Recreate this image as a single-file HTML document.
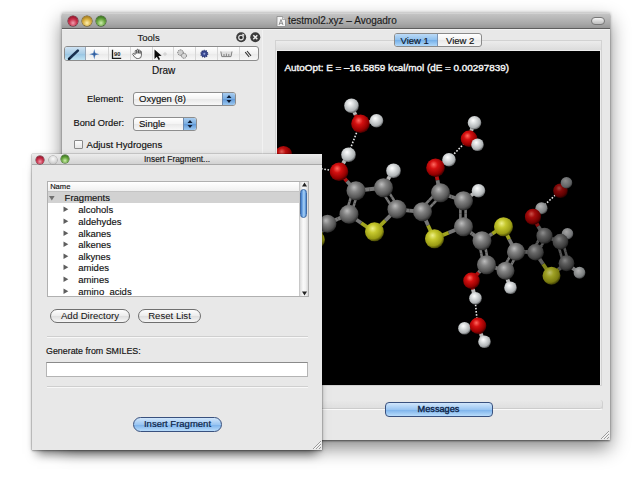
<!DOCTYPE html>
<html><head><meta charset="utf-8">
<style>
*{box-sizing:border-box;margin:0;padding:0}
html,body{width:638px;height:480px;overflow:hidden;background:#fff;font-family:"Liberation Sans",sans-serif;color:#111}
.abs{position:absolute}
.win{position:absolute;background:#e8e8e8}
#main{left:62px;top:13px;width:548px;height:427px;box-shadow:0 0 3px rgba(0,0,0,.3),0 1.5px 1.5px rgba(0,0,0,.3),0 8px 18px rgba(0,0,0,.48)}
#mtitle{left:0;top:0;width:548px;height:16px;background:linear-gradient(#dcdcdc 0,#c3c3c3 8%,#a9a9a9 70%,#979797 100%);border-bottom:1px solid #5e5e5e;box-shadow:0 1px 0 #f2f2f2}
.tl{position:absolute;width:10px;height:10px;border-radius:50%}
.red{background:radial-gradient(circle at 50% 70%,#f0a0b0 0,#c8304a 45%,#8a1026 85%,#5a0818 100%);box-shadow:0 0 0 .5px #5a1a28}
.yel{background:radial-gradient(circle at 50% 70%,#fff0b0 0,#d8b040 45%,#9a7018 85%,#6a4a08 100%);box-shadow:0 0 0 .5px #6a5010}
.grn{background:radial-gradient(circle at 50% 70%,#d0f0b0 0,#6aa840 45%,#306818 85%,#204a10 100%);box-shadow:0 0 0 .5px #2a5018}
.gry{background:radial-gradient(circle at 50% 35%,#fafafa 0,#dcdcdc 50%,#b5b5b5 100%);box-shadow:0 0 0 .6px #9a9a9a}
.t{position:absolute;white-space:nowrap;line-height:1;-webkit-text-stroke:.15px #111}
#ifrag{left:32px;top:154px;width:290px;height:296px;box-shadow:0 0 1px rgba(0,0,0,.6),0 1px 2px rgba(0,0,0,.25),0 9px 10px -5px rgba(0,0,0,.55),0 0 5px rgba(0,0,0,.1)}
#ititle{left:0;top:0;width:290px;height:11px;background:linear-gradient(#ececec,#d2d2d2);border-bottom:1px solid #a9a9a9}
.btn{position:absolute;border:1px solid #6f6f6f;border-radius:8px;background:linear-gradient(#fdfdfd 0,#ececec 50%,#dedede 51%,#f6f6f6 100%);font-size:9.6px;text-align:center;line-height:13px}
.bbtn{position:absolute;border:1px solid #39517e;border-radius:8px;background:linear-gradient(#d1e6fb 0,#9bc6f2 50%,#79b0ea 51%,#b9dcfb 100%);font-size:9.5px;text-align:center;line-height:13px;color:#0c1f46;-webkit-text-stroke:.2px #0c1f46}
</style></head><body>

<!-- MAIN WINDOW -->
<div id="main" class="win">
  <div id="mtitle" class="abs">
    <div class="tl red" style="left:6px;top:3px"></div>
    <div class="tl yel" style="left:20px;top:3px"></div>
    <div class="tl grn" style="left:34px;top:3px"></div>
    <svg class="abs" style="left:213.5px;top:2.5px" width="10" height="11"><path d="M1 .5 H6.5 L9.5 3.5 V10.5 H1 Z" fill="#f6f6f6" stroke="#8a8a8a" stroke-width=".8"/><path d="M6.5 .5 V3.5 H9.5" fill="#ddd" stroke="#8a8a8a" stroke-width=".6"/><path d="M3 9 L5 3.5 L7 9 M3.7 7.3 H6.3" stroke="#777" stroke-width=".8" fill="none"/></svg>
    <div class="t" style="left:226px;top:3px;font-size:10px;color:#222">testmol2.xyz – Avogadro</div>
    <div class="abs" style="left:529px;top:4px;width:14px;height:8px;border-radius:4px;border:1px solid #777;background:linear-gradient(#f4f4f4,#bdbdbd)"></div>
  </div>

  <!-- tools dock -->
  <div class="abs" style="left:199.5px;top:16px;width:1px;height:411px;background:#d6d6d6"></div>
  <div class="abs" style="left:200px;top:16px;width:1px;height:411px;background:#f2f2f2"></div>
  <div class="t" style="left:75.5px;top:20px;font-size:9.5px;color:#222">Tools</div>
  <svg class="abs" style="left:173.5px;top:19px" width="11" height="11"><circle cx="5.2" cy="5.2" r="5" fill="#3c3c3c"/><circle cx="5" cy="5.6" r="2.3" fill="none" stroke="#e6e6e6" stroke-width="1.1"/><circle cx="5" cy="5.6" r=".8" fill="#222"/><path d="M6 2.2 L8 2.6 L7.4 4.4" stroke="#e6e6e6" stroke-width=".9" fill="none"/></svg>
  
  <svg class="abs" style="left:187.5px;top:19px" width="11" height="11"><circle cx="5.3" cy="5.2" r="5" fill="#3c3c3c"/><path d="M3.3 3.2 L7.3 7.2 M7.3 3.2 L3.3 7.2" stroke="#f0f0f0" stroke-width="1.5"/></svg>
  
  <!-- segmented toolbar -->
  <div class="abs" style="left:2px;top:33px;width:195px;height:15px;border:1px solid #8c8c8c;border-radius:3px;background:linear-gradient(#ffffff,#f1f1f1 50%,#e9e9e9 51%,#f7f7f7);overflow:hidden">
    <div class="abs" style="left:0;top:0;width:20px;height:13px;background:linear-gradient(#cfe3f3,#a9cde6 50%,#96c3e2 51%,#bfe3f2)"></div>
    <div class="abs" style="left:20px;top:0;width:1px;height:13px;background:#9aa8b8"></div>
    <div class="abs" style="left:43px;top:0;width:1px;height:13px;background:#d6d6d6"></div>
    <div class="abs" style="left:65px;top:0;width:1px;height:13px;background:#d6d6d6"></div>
    <div class="abs" style="left:87px;top:0;width:1px;height:13px;background:#d6d6d6"></div>
    <div class="abs" style="left:108px;top:0;width:1px;height:13px;background:#d6d6d6"></div>
    <div class="abs" style="left:130px;top:0;width:1px;height:13px;background:#d6d6d6"></div>
    <div class="abs" style="left:152px;top:0;width:1px;height:13px;background:#d6d6d6"></div>
    <div class="abs" style="left:174px;top:0;width:1px;height:13px;background:#d6d6d6"></div>
    <svg class="abs" style="left:0;top:0.5px" width="195" height="12" viewBox="0 0 195 12">
      <path d="M4.2 10.8 L12.8 2.6" stroke="#1a3150" stroke-width="2.6" stroke-linecap="round"/>
      <path d="M3.2 11.6 L5 9.8" stroke="#0a1628" stroke-width="1.4"/>
      <path d="M29.3 1 L30.4 5.1 L34.4 6.2 L30.4 7.3 L29.3 11.4 L28.2 7.3 L24.2 6.2 L28.2 5.1 Z" fill="#5a86c0"/>
      <path d="M29.3 3.5 L29.9 5.6 L32 6.2 L29.9 6.8 L29.3 8.9 L28.7 6.8 L26.6 6.2 L28.7 5.6 Z" fill="#2f5a98"/>
      <path d="M47.5 1.8 V10.4 H56.2" stroke="#1a1a1a" stroke-width="1.3" fill="none"/>
      <text x="49" y="8.4" font-size="5.8" font-family="Liberation Sans" fill="#222" font-weight="700">90</text>
      <path d="M70.2 6.5 V3.2 q0 -.9 .8 -.9 q.8 0 .8 .9 V5.5 V2.2 q0 -.9 .8 -.9 q.8 0 .8 .9 V5.3 V2.8 q0 -.8 .8 -.8 q.8 0 .8 .8 V5.6 V3.8 q0 -.7 .7 -.7 q.7 0 .7 .7 V7.5 q0 3 -3 3 h-1 q-1.8 0 -2.8 -1.6 L67.8 6.6 q-.4 -.8 .3 -1.1 q.7 -.3 1.2 .4 Z" stroke="#404040" stroke-width=".8" fill="#fbfbfb"/>
      <path d="M89.5 1.5 L89.5 11 L91.8 8.7 L93.6 12 L95.1 11.2 L93.4 8 L96.6 7.8 Z" fill="#0a0a0a"/>
      <path d="M98 6 H102 M100 4 V8" stroke="#c8c8c8" stroke-width=".8"/>
      <circle cx="115.5" cy="4.6" r="2.8" fill="#cfcfcf" stroke="#707070" stroke-width="1" stroke-dasharray="1.2 .8"/>
      <circle cx="119" cy="7.8" r="2.5" fill="#d8d8d8" stroke="#707070" stroke-width="1" stroke-dasharray="1.2 .8"/>
      <circle cx="139.3" cy="5.8" r="3.2" fill="#3a4a94" stroke="#2a3670" stroke-width="1.6" stroke-dasharray="1.1 .9"/>
      <circle cx="139.3" cy="5.8" r="1" fill="#9aa8d8"/>
      <path d="M155.8 3.5 L156.8 8.6 H166 L167 3.5 M159 6 V8.4 M161.4 5.6 V8.4 M163.8 6 V8.4" stroke="#808080" stroke-width="1" fill="#dedede"/>
      <path d="M180.2 4.2 L184.2 9 M182 3 L186 7.8" stroke="#333" stroke-width="1.1"/>
    </svg>
  </div>
  <div class="t" style="left:90px;top:53px;font-size:10px;color:#111">Draw</div>
  <div class="t" style="left:25px;top:82px;font-size:9.3px;color:#111">Element:</div>
  <div class="abs" style="left:71px;top:79px;width:103px;height:14px;border:1px solid #8d8d8d;border-radius:3px;background:linear-gradient(#ffffff,#f3f3f3 50%,#e8e8e8 51%,#f8f8f8);overflow:hidden">
    <div class="abs" style="left:88px;top:0;width:14px;height:12px;background:linear-gradient(#a9cdf0,#78ace0 50%,#5f98d8 51%,#9cc8f0);border-left:1px solid #6d89ad"></div>
    <svg class="abs" style="left:91px;top:1px" width="8" height="10"><path d="M4 1 L6.5 4 H1.5Z M4 9 L6.5 6 H1.5Z" fill="#0e1d35"/></svg>
  </div>
  <div class="t" style="left:77px;top:81.2px;font-size:9.5px;color:#111">Oxygen (8)</div>
  <div class="t" style="left:11.5px;top:105.5px;font-size:9.3px;color:#111">Bond Order:</div>
  <div class="abs" style="left:71px;top:104px;width:64px;height:14px;border:1px solid #8d8d8d;border-radius:3px;background:linear-gradient(#ffffff,#f3f3f3 50%,#e8e8e8 51%,#f8f8f8);overflow:hidden">
    <div class="abs" style="left:49px;top:0;width:14px;height:12px;background:linear-gradient(#a9cdf0,#78ace0 50%,#5f98d8 51%,#9cc8f0);border-left:1px solid #6d89ad"></div>
    <svg class="abs" style="left:52px;top:1px" width="8" height="10"><path d="M4 1 L6.5 4 H1.5Z M4 9 L6.5 6 H1.5Z" fill="#0e1d35"/></svg>
  </div>
  <div class="t" style="left:77px;top:105.6px;font-size:9.5px;color:#111">Single</div>
  <div class="abs" style="left:11.5px;top:127px;width:9px;height:9px;border:1px solid #8a8a8a;border-radius:1px;background:linear-gradient(#fdfdfd,#e6e6e6)"></div>
  <div class="t" style="left:24.5px;top:126.5px;font-size:9.6px;color:#111">Adjust Hydrogens</div>

  <!-- tab widget -->
  <div class="abs" style="left:213px;top:27px;width:327px;height:346px;border:1px solid #d2d2d2;background:#ededed"></div>
  <div class="abs" style="left:214px;top:28px;width:325px;height:9px;background:linear-gradient(#ececec,#dcdcdc)"></div>
  <div class="abs" style="left:332px;top:20px;width:88px;height:14px;border:1px solid #8a8a8a;border-radius:3px;background:linear-gradient(#ffffff,#f2f2f2 50%,#e9e9e9 51%,#f6f6f6);overflow:hidden">
    <div class="abs" style="left:0;top:0;width:43px;height:12px;background:linear-gradient(#bcdaf6,#8ec0ee 50%,#74afe8 51%,#b0d8fa);border-right:1px solid #7a95b8"></div>
  </div>
  <div class="t" style="left:338.5px;top:22.5px;font-size:9.5px;color:#0c1a33">View 1</div>
  <div class="t" style="left:384px;top:22.5px;font-size:9.5px;color:#111">View 2</div>
  <div id="gl" class="abs" style="left:215px;top:37.5px;width:323px;height:334.5px;background:#000;overflow:hidden">
<svg class="abs" style="left:0;top:0" width="323" height="335" viewBox="277 50.5 323 334.5">
<defs>
<radialGradient id="gC" cx="0.42" cy="0.38" r="0.62" fx="0.4" fy="0.32"><stop offset="0" stop-color="#bdbdbd"/><stop offset="0.35" stop-color="#858585"/><stop offset="0.8" stop-color="#555555"/><stop offset="1" stop-color="#2a2a2a"/></radialGradient>
<radialGradient id="gO" cx="0.42" cy="0.38" r="0.62" fx="0.4" fy="0.32"><stop offset="0" stop-color="#ff6a60"/><stop offset="0.35" stop-color="#d41010"/><stop offset="0.8" stop-color="#940000"/><stop offset="1" stop-color="#420000"/></radialGradient>
<radialGradient id="gH" cx="0.42" cy="0.38" r="0.62" fx="0.4" fy="0.32"><stop offset="0" stop-color="#ffffff"/><stop offset="0.35" stop-color="#dcdfe0"/><stop offset="0.8" stop-color="#aeb2b4"/><stop offset="1" stop-color="#5a5c5e"/></radialGradient>
<radialGradient id="gS" cx="0.42" cy="0.38" r="0.62" fx="0.4" fy="0.32"><stop offset="0" stop-color="#eef08a"/><stop offset="0.35" stop-color="#c6c82e"/><stop offset="0.8" stop-color="#9a9c14"/><stop offset="1" stop-color="#4a4a06"/></radialGradient>
<radialGradient id="fO6" cx="0.42" cy="0.38" r="0.62" fx="0.4" fy="0.32"><stop offset="0" stop-color="#9e413b"/><stop offset="0.35" stop-color="#830909"/><stop offset="0.8" stop-color="#5b0000"/><stop offset="1" stop-color="#280000"/></radialGradient>
<radialGradient id="fH11" cx="0.42" cy="0.38" r="0.62" fx="0.4" fy="0.32"><stop offset="0" stop-color="#8c8c8c"/><stop offset="0.35" stop-color="#797a7b"/><stop offset="0.8" stop-color="#5f6163"/><stop offset="1" stop-color="#313233"/></radialGradient>
<radialGradient id="fH12" cx="0.42" cy="0.38" r="0.62" fx="0.4" fy="0.32"><stop offset="0" stop-color="#b7b7b7"/><stop offset="0.35" stop-color="#9ea0a1"/><stop offset="0.8" stop-color="#7d8081"/><stop offset="1" stop-color="#404243"/></radialGradient>
<radialGradient id="fO7" cx="0.42" cy="0.38" r="0.62" fx="0.4" fy="0.32"><stop offset="0" stop-color="#c6524a"/><stop offset="0.35" stop-color="#a50c0c"/><stop offset="0.8" stop-color="#730000"/><stop offset="1" stop-color="#330000"/></radialGradient>
<radialGradient id="fC14" cx="0.42" cy="0.38" r="0.62" fx="0.4" fy="0.32"><stop offset="0" stop-color="#8d8d8d"/><stop offset="0.35" stop-color="#636363"/><stop offset="0.8" stop-color="#3f3f3f"/><stop offset="1" stop-color="#1f1f1f"/></radialGradient>
<radialGradient id="fC16" cx="0.42" cy="0.38" r="0.62" fx="0.4" fy="0.32"><stop offset="0" stop-color="#848484"/><stop offset="0.35" stop-color="#5d5d5d"/><stop offset="0.8" stop-color="#3b3b3b"/><stop offset="1" stop-color="#1d1d1d"/></radialGradient>
<radialGradient id="fH13" cx="0.42" cy="0.38" r="0.62" fx="0.4" fy="0.32"><stop offset="0" stop-color="#a5a5a5"/><stop offset="0.35" stop-color="#8f9091"/><stop offset="0.8" stop-color="#717375"/><stop offset="1" stop-color="#3a3b3d"/></radialGradient>
<radialGradient id="fC15" cx="0.42" cy="0.38" r="0.62" fx="0.4" fy="0.32"><stop offset="0" stop-color="#939393"/><stop offset="0.35" stop-color="#676767"/><stop offset="0.8" stop-color="#424242"/><stop offset="1" stop-color="#202020"/></radialGradient>
<radialGradient id="fC17" cx="0.42" cy="0.38" r="0.62" fx="0.4" fy="0.32"><stop offset="0" stop-color="#848484"/><stop offset="0.35" stop-color="#5d5d5d"/><stop offset="0.8" stop-color="#3b3b3b"/><stop offset="1" stop-color="#1d1d1d"/></radialGradient>
<radialGradient id="fS4" cx="0.42" cy="0.38" r="0.62" fx="0.4" fy="0.32"><stop offset="0" stop-color="#bec06e"/><stop offset="0.35" stop-color="#9ea024"/><stop offset="0.8" stop-color="#7b7c10"/><stop offset="1" stop-color="#3b3b04"/></radialGradient>
<radialGradient id="fH14" cx="0.42" cy="0.38" r="0.62" fx="0.4" fy="0.32"><stop offset="0" stop-color="#b2b2b2"/><stop offset="0.35" stop-color="#9a9c9c"/><stop offset="0.8" stop-color="#797c7d"/><stop offset="1" stop-color="#3e4041"/></radialGradient>
<radialGradient id="fRP" cx="0.42" cy="0.38" r="0.62" fx="0.4" fy="0.32"><stop offset="0" stop-color="#e55f56"/><stop offset="0.35" stop-color="#be0e0e"/><stop offset="0.8" stop-color="#850000"/><stop offset="1" stop-color="#3b0000"/></radialGradient>
</defs>
<line x1="360.0" y1="123.0" x2="355.5" y2="114.0" stroke="#b01010" stroke-width="3.8"/>
<line x1="355.5" y1="114.0" x2="351.0" y2="105.0" stroke="#b8b8b8" stroke-width="3.8"/>
<line x1="360.0" y1="123.0" x2="368.0" y2="121.5" stroke="#b01010" stroke-width="3.8"/>
<line x1="368.0" y1="121.5" x2="376.0" y2="120.0" stroke="#b8b8b8" stroke-width="3.8"/>
<line x1="338.5" y1="171.0" x2="343.2" y2="162.5" stroke="#b01010" stroke-width="3.8"/>
<line x1="343.2" y1="162.5" x2="348.0" y2="154.0" stroke="#b8b8b8" stroke-width="3.8"/>
<line x1="338.5" y1="171.0" x2="347.0" y2="180.5" stroke="#b01010" stroke-width="3.8"/>
<line x1="347.0" y1="180.5" x2="355.5" y2="190.0" stroke="#767676" stroke-width="3.8"/>
<line x1="358.0" y1="190.7" x2="354.5" y2="202.5" stroke="#767676" stroke-width="2.6"/>
<line x1="354.5" y1="202.5" x2="351.0" y2="214.2" stroke="#767676" stroke-width="2.6"/>
<line x1="353.0" y1="189.3" x2="349.5" y2="201.0" stroke="#767676" stroke-width="2.6"/>
<line x1="349.5" y1="201.0" x2="346.0" y2="212.8" stroke="#767676" stroke-width="2.6"/>
<line x1="355.5" y1="190.0" x2="369.2" y2="188.5" stroke="#767676" stroke-width="3.8"/>
<line x1="369.2" y1="188.5" x2="383.0" y2="187.0" stroke="#767676" stroke-width="3.8"/>
<line x1="383.0" y1="187.0" x2="388.0" y2="178.5" stroke="#767676" stroke-width="3.8"/>
<line x1="388.0" y1="178.5" x2="393.0" y2="170.0" stroke="#b8b8b8" stroke-width="3.8"/>
<line x1="385.2" y1="185.6" x2="392.0" y2="196.4" stroke="#767676" stroke-width="2.6"/>
<line x1="392.0" y1="196.4" x2="398.7" y2="207.1" stroke="#767676" stroke-width="2.6"/>
<line x1="380.8" y1="188.4" x2="387.5" y2="199.1" stroke="#767676" stroke-width="2.6"/>
<line x1="387.5" y1="199.1" x2="394.3" y2="209.9" stroke="#767676" stroke-width="2.6"/>
<line x1="396.5" y1="208.5" x2="385.2" y2="219.8" stroke="#767676" stroke-width="3.8"/>
<line x1="385.2" y1="219.8" x2="374.0" y2="231.0" stroke="#a0a420" stroke-width="3.8"/>
<line x1="374.0" y1="231.0" x2="361.2" y2="222.2" stroke="#a0a420" stroke-width="3.8"/>
<line x1="361.2" y1="222.2" x2="348.5" y2="213.5" stroke="#767676" stroke-width="3.8"/>
<line x1="348.5" y1="213.5" x2="337.8" y2="218.2" stroke="#767676" stroke-width="3.8"/>
<line x1="337.8" y1="218.2" x2="327.0" y2="223.0" stroke="#767676" stroke-width="3.8"/>
<line x1="327.0" y1="223.0" x2="321.5" y2="231.0" stroke="#767676" stroke-width="3.8"/>
<line x1="321.5" y1="231.0" x2="316.0" y2="239.0" stroke="#a0a420" stroke-width="3.8"/>
<line x1="396.5" y1="208.5" x2="409.2" y2="209.8" stroke="#767676" stroke-width="3.8"/>
<line x1="409.2" y1="209.8" x2="422.0" y2="211.0" stroke="#767676" stroke-width="3.8"/>
<line x1="435.0" y1="167.0" x2="441.8" y2="163.0" stroke="#b01010" stroke-width="3.8"/>
<line x1="441.8" y1="163.0" x2="448.5" y2="159.0" stroke="#b8b8b8" stroke-width="3.8"/>
<line x1="435.0" y1="167.0" x2="437.5" y2="179.5" stroke="#b01010" stroke-width="3.8"/>
<line x1="437.5" y1="179.5" x2="440.0" y2="192.0" stroke="#767676" stroke-width="3.8"/>
<line x1="468.6" y1="138.0" x2="471.3" y2="130.0" stroke="#b01010" stroke-width="3.8"/>
<line x1="471.3" y1="130.0" x2="474.0" y2="122.0" stroke="#b8b8b8" stroke-width="3.8"/>
<line x1="468.6" y1="138.0" x2="472.8" y2="141.0" stroke="#b01010" stroke-width="3.8"/>
<line x1="472.8" y1="141.0" x2="477.0" y2="144.0" stroke="#b8b8b8" stroke-width="3.8"/>
<line x1="441.9" y1="193.8" x2="432.9" y2="203.3" stroke="#767676" stroke-width="2.6"/>
<line x1="432.9" y1="203.3" x2="423.9" y2="212.8" stroke="#767676" stroke-width="2.6"/>
<line x1="438.1" y1="190.2" x2="429.1" y2="199.7" stroke="#767676" stroke-width="2.6"/>
<line x1="429.1" y1="199.7" x2="420.1" y2="209.2" stroke="#767676" stroke-width="2.6"/>
<line x1="440.0" y1="192.0" x2="451.5" y2="196.0" stroke="#767676" stroke-width="3.8"/>
<line x1="451.5" y1="196.0" x2="463.0" y2="200.0" stroke="#767676" stroke-width="3.8"/>
<line x1="463.0" y1="200.0" x2="470.5" y2="195.0" stroke="#767676" stroke-width="3.8"/>
<line x1="470.5" y1="195.0" x2="478.0" y2="190.0" stroke="#b8b8b8" stroke-width="3.8"/>
<line x1="465.6" y1="200.0" x2="465.6" y2="213.0" stroke="#767676" stroke-width="2.6"/>
<line x1="465.6" y1="213.0" x2="465.6" y2="226.0" stroke="#767676" stroke-width="2.6"/>
<line x1="460.4" y1="200.0" x2="460.4" y2="213.0" stroke="#767676" stroke-width="2.6"/>
<line x1="460.4" y1="213.0" x2="460.4" y2="226.0" stroke="#767676" stroke-width="2.6"/>
<line x1="463.0" y1="226.0" x2="448.5" y2="232.0" stroke="#767676" stroke-width="3.8"/>
<line x1="448.5" y1="232.0" x2="434.0" y2="238.0" stroke="#a0a420" stroke-width="3.8"/>
<line x1="434.0" y1="238.0" x2="428.0" y2="224.5" stroke="#a0a420" stroke-width="3.8"/>
<line x1="428.0" y1="224.5" x2="422.0" y2="211.0" stroke="#767676" stroke-width="3.8"/>
<line x1="463.0" y1="226.0" x2="472.2" y2="233.0" stroke="#767676" stroke-width="3.8"/>
<line x1="472.2" y1="233.0" x2="481.5" y2="240.0" stroke="#767676" stroke-width="3.8"/>
<line x1="503.0" y1="226.0" x2="492.2" y2="233.0" stroke="#a0a420" stroke-width="3.8"/>
<line x1="492.2" y1="233.0" x2="481.5" y2="240.0" stroke="#767676" stroke-width="3.8"/>
<line x1="484.1" y1="239.5" x2="486.3" y2="251.5" stroke="#767676" stroke-width="2.6"/>
<line x1="486.3" y1="251.5" x2="488.6" y2="263.5" stroke="#767676" stroke-width="2.6"/>
<line x1="478.9" y1="240.5" x2="481.2" y2="252.5" stroke="#767676" stroke-width="2.6"/>
<line x1="481.2" y1="252.5" x2="483.4" y2="264.5" stroke="#767676" stroke-width="2.6"/>
<line x1="486.0" y1="264.0" x2="495.5" y2="267.0" stroke="#767676" stroke-width="3.8"/>
<line x1="495.5" y1="267.0" x2="505.0" y2="270.0" stroke="#767676" stroke-width="3.8"/>
<line x1="502.7" y1="268.7" x2="508.0" y2="259.2" stroke="#767676" stroke-width="2.6"/>
<line x1="508.0" y1="259.2" x2="513.2" y2="249.7" stroke="#767676" stroke-width="2.6"/>
<line x1="507.3" y1="271.3" x2="512.5" y2="261.8" stroke="#767676" stroke-width="2.6"/>
<line x1="512.5" y1="261.8" x2="517.8" y2="252.3" stroke="#767676" stroke-width="2.6"/>
<line x1="515.5" y1="251.0" x2="509.2" y2="238.5" stroke="#767676" stroke-width="3.8"/>
<line x1="509.2" y1="238.5" x2="503.0" y2="226.0" stroke="#a0a420" stroke-width="3.8"/>
<line x1="486.0" y1="264.0" x2="478.5" y2="272.0" stroke="#767676" stroke-width="3.8"/>
<line x1="478.5" y1="272.0" x2="471.0" y2="280.0" stroke="#b01010" stroke-width="3.8"/>
<line x1="505.0" y1="270.0" x2="507.5" y2="278.5" stroke="#767676" stroke-width="3.8"/>
<line x1="507.5" y1="278.5" x2="510.0" y2="287.0" stroke="#b8b8b8" stroke-width="3.8"/>
<line x1="471.0" y1="280.0" x2="473.0" y2="288.8" stroke="#b01010" stroke-width="3.8"/>
<line x1="473.0" y1="288.8" x2="475.0" y2="297.5" stroke="#b8b8b8" stroke-width="3.8"/>
<line x1="477.5" y1="325.0" x2="470.8" y2="326.2" stroke="#b01010" stroke-width="3.8"/>
<line x1="470.8" y1="326.2" x2="464.0" y2="327.5" stroke="#b8b8b8" stroke-width="3.8"/>
<line x1="477.5" y1="325.0" x2="480.8" y2="333.0" stroke="#b01010" stroke-width="3.8"/>
<line x1="480.8" y1="333.0" x2="484.0" y2="341.0" stroke="#b8b8b8" stroke-width="3.8"/>
<line x1="515.5" y1="251.0" x2="525.2" y2="251.2" stroke="#767676" stroke-width="3.8"/>
<line x1="525.2" y1="251.2" x2="535.0" y2="251.5" stroke="#5c5c5c" stroke-width="3.8"/>
<line x1="560.0" y1="190.0" x2="563.0" y2="186.0" stroke="#6d0909" stroke-width="3.8"/>
<line x1="563.0" y1="186.0" x2="566.0" y2="182.0" stroke="#656565" stroke-width="3.8"/>
<line x1="532.5" y1="216.0" x2="536.8" y2="211.8" stroke="#890c0c" stroke-width="3.8"/>
<line x1="536.8" y1="211.8" x2="541.0" y2="207.5" stroke="#848484" stroke-width="3.8"/>
<line x1="532.5" y1="216.0" x2="538.2" y2="225.5" stroke="#890c0c" stroke-width="3.8"/>
<line x1="538.2" y1="225.5" x2="544.0" y2="235.0" stroke="#585858" stroke-width="3.8"/>
<line x1="546.3" y1="236.2" x2="541.8" y2="244.5" stroke="#585858" stroke-width="2.6"/>
<line x1="541.8" y1="244.5" x2="537.3" y2="252.7" stroke="#5c5c5c" stroke-width="2.6"/>
<line x1="541.7" y1="233.8" x2="537.2" y2="242.0" stroke="#585858" stroke-width="2.6"/>
<line x1="537.2" y1="242.0" x2="532.7" y2="250.3" stroke="#5c5c5c" stroke-width="2.6"/>
<line x1="544.0" y1="235.0" x2="552.0" y2="238.0" stroke="#585858" stroke-width="3.8"/>
<line x1="552.0" y1="238.0" x2="560.0" y2="241.0" stroke="#525252" stroke-width="3.8"/>
<line x1="560.0" y1="241.0" x2="563.5" y2="237.0" stroke="#525252" stroke-width="3.8"/>
<line x1="563.5" y1="237.0" x2="567.0" y2="233.0" stroke="#777777" stroke-width="3.8"/>
<line x1="562.5" y1="240.3" x2="565.5" y2="251.1" stroke="#525252" stroke-width="2.6"/>
<line x1="565.5" y1="251.1" x2="568.5" y2="261.8" stroke="#525252" stroke-width="2.6"/>
<line x1="557.5" y1="241.7" x2="560.5" y2="252.4" stroke="#525252" stroke-width="2.6"/>
<line x1="560.5" y1="252.4" x2="563.5" y2="263.2" stroke="#525252" stroke-width="2.6"/>
<line x1="566.0" y1="262.5" x2="558.5" y2="268.8" stroke="#525252" stroke-width="3.8"/>
<line x1="558.5" y1="268.8" x2="551.0" y2="275.0" stroke="#808319" stroke-width="3.8"/>
<line x1="551.0" y1="275.0" x2="543.0" y2="263.2" stroke="#808319" stroke-width="3.8"/>
<line x1="543.0" y1="263.2" x2="535.0" y2="251.5" stroke="#5c5c5c" stroke-width="3.8"/>
<line x1="566.0" y1="262.5" x2="572.5" y2="267.2" stroke="#525252" stroke-width="3.8"/>
<line x1="572.5" y1="267.2" x2="579.0" y2="272.0" stroke="#808080" stroke-width="3.8"/>
<line x1="360" y1="123" x2="348" y2="154" stroke="#e8e8e8" stroke-width="1.6" stroke-dasharray="1.6 1.6"/>
<line x1="468.6" y1="138" x2="448.5" y2="159" stroke="#e8e8e8" stroke-width="1.6" stroke-dasharray="1.6 1.6"/>
<line x1="475" y1="297.5" x2="477.5" y2="325" stroke="#e8e8e8" stroke-width="1.6" stroke-dasharray="1.6 1.6"/>
<line x1="560" y1="190" x2="541" y2="207.5" stroke="#e8e8e8" stroke-width="1.6" stroke-dasharray="1.6 1.6"/>
<line x1="338.5" y1="171" x2="322" y2="168" stroke="#e8e8e8" stroke-width="1.6" stroke-dasharray="1.6 1.6"/>
<circle cx="567.5" cy="233" r="5.8" fill="url(#fH13)"/>
<circle cx="579.5" cy="272" r="5.8999999999999995" fill="url(#fH14)"/>
<circle cx="541.5" cy="207.5" r="6.1" fill="url(#fH12)"/>
<circle cx="510.5" cy="287" r="6.3" fill="url(#gH)"/>
<circle cx="475.5" cy="297.5" r="6.3" fill="url(#gH)"/>
<circle cx="464.5" cy="327.5" r="6.3" fill="url(#gH)"/>
<circle cx="484.5" cy="341" r="6.3" fill="url(#gH)"/>
<circle cx="449.0" cy="159" r="6.8" fill="url(#gH)"/>
<circle cx="474.5" cy="122" r="6.8" fill="url(#gH)"/>
<circle cx="478.5" cy="190" r="6.8" fill="url(#gH)"/>
<circle cx="351.5" cy="105" r="7.3" fill="url(#gH)"/>
<circle cx="348.5" cy="154" r="7.3" fill="url(#gH)"/>
<circle cx="393.5" cy="170" r="7.3" fill="url(#gH)"/>
<circle cx="560.5" cy="190" r="7.3" fill="url(#fO6)"/>
<circle cx="560.5" cy="241" r="7.9" fill="url(#fC16)"/>
<circle cx="566.5" cy="262.5" r="7.9" fill="url(#fC17)"/>
<circle cx="544.5" cy="235" r="8.1" fill="url(#fC14)"/>
<circle cx="533.0" cy="216" r="8.1" fill="url(#fO7)"/>
<circle cx="535.5" cy="251.5" r="8.3" fill="url(#fC15)"/>
<circle cx="316.5" cy="239" r="8.5" fill="url(#gS)"/>
<circle cx="469.1" cy="138" r="8.3" fill="url(#gO)"/>
<circle cx="471.5" cy="280" r="8.3" fill="url(#gO)"/>
<circle cx="478.0" cy="325" r="8.3" fill="url(#gO)"/>
<circle cx="327.5" cy="223" r="9.0" fill="url(#gC)"/>
<circle cx="283.5" cy="154" r="8.8" fill="url(#fRP)"/>
<circle cx="516.0" cy="251" r="9.0" fill="url(#gC)"/>
<circle cx="505.5" cy="270" r="9.0" fill="url(#gC)"/>
<circle cx="551.5" cy="275" r="9.0" fill="url(#fS4)"/>
<circle cx="360.5" cy="123" r="9.3" fill="url(#gO)"/>
<circle cx="339.0" cy="171" r="9.3" fill="url(#gO)"/>
<circle cx="356.0" cy="190" r="9.5" fill="url(#gC)"/>
<circle cx="383.5" cy="187" r="9.5" fill="url(#gC)"/>
<circle cx="397.0" cy="208.5" r="9.5" fill="url(#gC)"/>
<circle cx="374.5" cy="231" r="9.5" fill="url(#gS)"/>
<circle cx="349.0" cy="213.5" r="9.5" fill="url(#gC)"/>
<circle cx="435.5" cy="167" r="9.3" fill="url(#gO)"/>
<circle cx="440.5" cy="192" r="9.5" fill="url(#gC)"/>
<circle cx="463.5" cy="200" r="9.5" fill="url(#gC)"/>
<circle cx="422.5" cy="211" r="9.5" fill="url(#gC)"/>
<circle cx="463.5" cy="226" r="9.5" fill="url(#gC)"/>
<circle cx="434.5" cy="238" r="9.5" fill="url(#gS)"/>
<circle cx="503.5" cy="226" r="9.5" fill="url(#gS)"/>
<circle cx="482.0" cy="240" r="9.5" fill="url(#gC)"/>
<circle cx="486.5" cy="264" r="9.5" fill="url(#gC)"/>
<circle cx="376.5" cy="120" r="6.8" fill="url(#gH)"/>
<circle cx="477.5" cy="144" r="6.3" fill="url(#gH)"/>
<circle cx="566.5" cy="182" r="5.8" fill="url(#fH11)"/>
</svg>
<div class="t" style="left:7.5px;top:12.3px;font-size:9.9px;font-weight:400;color:#f4f4f4;-webkit-text-stroke:.4px #f4f4f4">AutoOpt: E = –16.5859 kcal/mol (dE = 0.00297839)</div>
</div>
  <!-- messages strip -->
  <div class="abs" style="left:213px;top:387px;width:328px;height:10px;border-radius:0 3px 3px 0;background:linear-gradient(#e9e9e9,#dedede);border-bottom:1px solid #fafafa;box-shadow:inset 0 -1px 0 #cccccc;border-right:1px solid #d0d0d0"></div>
  <div class="bbtn" style="left:322.5px;top:389px;width:108px;height:15px;border-radius:4px;font-weight:400;font-size:9.2px;-webkit-text-stroke:.35px #0c1f46">Messages</div>
  <svg class="abs" style="left:537px;top:416px" width="11" height="11"><path d="M2 10 L10 2 M5 10 L10 5 M8 10 L10 8" stroke="#9a9a9a" stroke-width="1"/><path d="M3 10 L10 3 M6 10 L10 6" stroke="#fafafa" stroke-width=".8"/></svg>
</div>

<!-- INSERT FRAGMENT WINDOW -->
<div id="ifrag" class="win">
  <div id="ititle" class="abs">
    <div class="tl red" style="left:4.3px;top:1.6px;width:8px;height:8px"></div>
    <div class="tl gry" style="left:16.5px;top:1.6px;width:8px;height:8px"></div>
    <div class="tl grn" style="left:29px;top:1.3px;width:8px;height:8px"></div>
    <div class="t" style="left:112px;top:1.3px;font-size:8.4px;color:#222">Insert Fragment...</div>
  </div>

  <!-- list -->
  <div class="abs" style="left:14.5px;top:26.5px;width:262px;height:116.2px;background:#fff;border:1px solid #b0b0b0;overflow:hidden">
    <div class="abs" style="left:0;top:0;width:252px;height:10.2px;background:linear-gradient(#ffffff,#f0f0f0);border-bottom:1px solid #c4c4c4"></div>
    <div class="t" style="left:2.65px;top:1px;font-size:7.6px;color:#111">Name</div>
    <div class="abs" style="left:0;top:10.25px;width:252px;height:11.2px;background:#d2d2d2"></div>
    <svg class="abs" style="left:1.5px;top:14px" width="6" height="5"><path d="M0 0 H5.6 L2.8 4.6Z" fill="#707070"/></svg>
    <div class="t" style="left:17.1px;top:11.6px;font-size:9.5px;color:#111">Fragments</div>
    <svg class="abs" style="left:15px;top:24.7px" width="6" height="7"><path d="M0.5 0.5 L5.3 3.2 L0.5 6Z" fill="#5e5e5e"/></svg>
    <div class="t" style="left:30.8px;top:23.7px;font-size:9.5px;color:#111">alcohols</div>
    <svg class="abs" style="left:15px;top:36.3px" width="6" height="7"><path d="M0.5 0.5 L5.3 3.2 L0.5 6Z" fill="#5e5e5e"/></svg>
    <div class="t" style="left:30.8px;top:35.3px;font-size:9.5px;color:#111">aldehydes</div>
    <svg class="abs" style="left:15px;top:48.0px" width="6" height="7"><path d="M0.5 0.5 L5.3 3.2 L0.5 6Z" fill="#5e5e5e"/></svg>
    <div class="t" style="left:30.8px;top:47.0px;font-size:9.5px;color:#111">alkanes</div>
    <svg class="abs" style="left:15px;top:59.6px" width="6" height="7"><path d="M0.5 0.5 L5.3 3.2 L0.5 6Z" fill="#5e5e5e"/></svg>
    <div class="t" style="left:30.8px;top:58.6px;font-size:9.5px;color:#111">alkenes</div>
    <svg class="abs" style="left:15px;top:71.2px" width="6" height="7"><path d="M0.5 0.5 L5.3 3.2 L0.5 6Z" fill="#5e5e5e"/></svg>
    <div class="t" style="left:30.8px;top:70.2px;font-size:9.5px;color:#111">alkynes</div>
    <svg class="abs" style="left:15px;top:82.8px" width="6" height="7"><path d="M0.5 0.5 L5.3 3.2 L0.5 6Z" fill="#5e5e5e"/></svg>
    <div class="t" style="left:30.8px;top:81.8px;font-size:9.5px;color:#111">amides</div>
    <svg class="abs" style="left:15px;top:94.4px" width="6" height="7"><path d="M0.5 0.5 L5.3 3.2 L0.5 6Z" fill="#5e5e5e"/></svg>
    <div class="t" style="left:30.8px;top:93.4px;font-size:9.5px;color:#111">amines</div>
    <svg class="abs" style="left:15px;top:106.0px" width="6" height="7"><path d="M0.5 0.5 L5.3 3.2 L0.5 6Z" fill="#5e5e5e"/></svg>
    <div class="t" style="left:30.8px;top:105.0px;font-size:9.5px;color:#111">amino_acids</div>
    <!-- scrollbar -->
    <div class="abs" style="left:251.5px;top:0;width:9px;height:114.2px;background:linear-gradient(90deg,#dcdcdc,#fafafa 40%,#f2f2f2 70%,#d8d8d8);border-left:1px solid #c8c8c8"></div>
    <svg class="abs" style="left:253px;top:0.5px" width="7" height="5"><path d="M3.5 0.5 L6 4.5 H1Z" fill="#222"/></svg>
    <svg class="abs" style="left:253px;top:109px" width="7" height="5"><path d="M3.5 4.5 L6 0.5 H1Z" fill="#222"/></svg>
    <div class="abs" style="left:252.5px;top:7.8px;width:7px;height:29px;border-radius:3.5px;background:linear-gradient(90deg,#3d78c8,#8fc0f0 45%,#a9d2f7 60%,#4a86d0);border:1px solid #3f6aa3"></div>
  </div>
  <div class="btn" style="left:18px;top:154.7px;width:80px;height:14.3px;line-height:12.3px">Add Directory</div>
  <div class="btn" style="left:106px;top:154.7px;width:63px;height:14.3px;line-height:12.3px">Reset List</div>
  <div class="abs" style="left:14.7px;top:181.5px;width:261.3px;height:1px;background:#cfcfcf;border-bottom:1px solid #f8f8f8;box-sizing:content-box"></div>
  <div class="t" style="left:14px;top:192.5px;font-size:8.9px;color:#111">Generate from SMILES:</div>
  <div class="abs" style="left:14px;top:207.5px;width:262px;height:15.5px;background:#fff;border:1px solid #b4b4b4;border-top-color:#8a8a8a"></div>
  <div class="abs" style="left:14.7px;top:231.5px;width:261.3px;height:1px;background:#cfcfcf;border-bottom:1px solid #f8f8f8;box-sizing:content-box"></div>
  <div class="bbtn" style="left:101px;top:263px;width:89px;height:14.5px;line-height:12.5px">Insert Fragment</div>
  <svg class="abs" style="left:279px;top:285px" width="11" height="11"><path d="M2 10 L10 2 M5 10 L10 5 M8 10 L10 8" stroke="#9a9a9a" stroke-width="1"/><path d="M3 10 L10 3 M6 10 L10 6" stroke="#fafafa" stroke-width=".8"/></svg>
</div>

</body></html>
